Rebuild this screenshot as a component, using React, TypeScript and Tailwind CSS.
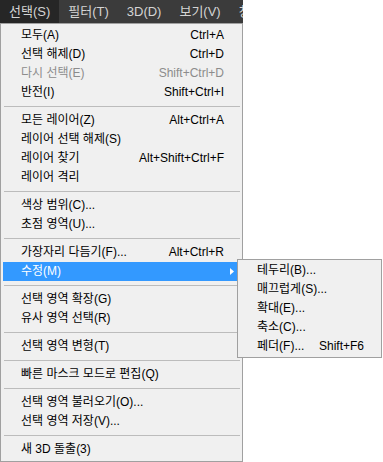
import React from "react"

type Item = { label: string; shortcut?: string; disabled?: boolean; sub?: boolean }

const groups: Item[][] = [
  [
    { label: "모두(A)", shortcut: "Ctrl+A" },
    { label: "선택 해제(D)", shortcut: "Ctrl+D" },
    { label: "다시 선택(E)", shortcut: "Shift+Ctrl+D", disabled: true },
    { label: "반전(I)", shortcut: "Shift+Ctrl+I" },
  ],
  [
    { label: "모든 레이어(Z)", shortcut: "Alt+Ctrl+A" },
    { label: "레이어 선택 해제(S)" },
    { label: "레이어 찾기", shortcut: "Alt+Shift+Ctrl+F" },
    { label: "레이어 격리" },
  ],
  [{ label: "색상 범위(C)..." }, { label: "초점 영역(U)..." }],
  [
    { label: "가장자리 다듬기(F)...", shortcut: "Alt+Ctrl+R" },
    { label: "수정(M)", sub: true },
  ],
  [{ label: "선택 영역 확장(G)" }, { label: "유사 영역 선택(R)" }],
  [{ label: "선택 영역 변형(T)" }],
  [{ label: "빠른 마스크 모드로 편집(Q)" }],
  [{ label: "선택 영역 불러오기(O)..." }, { label: "선택 영역 저장(V)..." }],
  [{ label: "새 3D 돌출(3)" }],
]

const subItems: Item[] = [
  { label: "테두리(B)..." },
  { label: "매끄럽게(S)..." },
  { label: "확대(E)..." },
  { label: "축소(C)..." },
  { label: "페더(F)...", shortcut: "Shift+F6" },
]

const menus = ["선택(S)", "필터(T)", "3D(D)", "보기(V)", "창"]

function SubMenu() {
  return (
    <div className="absolute -top-[3px] left-[234px] w-[145px] border border-[#a0a0a0] bg-[#f0f0f0] p-px z-10">
      {subItems.map((item) => (
        <div key={item.label} className="flex h-[19px] items-center pl-[18px] pr-[16px] leading-[19px] text-black">
          <span>{item.label}</span>
          {item.shortcut && <span className="ml-auto">{item.shortcut}</span>}
        </div>
      ))}
    </div>
  )
}

function Row({ item }: { item: Item }) {
  if (item.sub) {
    return (
      <div className="relative flex h-[19px] items-center bg-[#3399ff] pl-[18px] pr-[16px] leading-[19px] text-white">
        <span>{item.label}</span>
        <svg width="4" height="7" viewBox="0 0 4 7" className="ml-auto -mr-[10px]">
          <polygon points="0,0 4,3.5 0,7" fill="#ffffff" />
        </svg>
        <SubMenu />
      </div>
    )
  }
  return (
    <div
      className={`flex h-[19px] items-center pl-[18px] pr-[16px] leading-[19px] ${
        item.disabled ? "text-[#8c8c8c]" : "text-black"
      }`}
    >
      <span>{item.label}</span>
      {item.shortcut && <span className="ml-auto">{item.shortcut}</span>}
    </div>
  )
}

export default function App() {
  return (
    <div
      className="w-[383px] h-[462px] bg-white text-[12px] overflow-hidden"
      style={{ fontFamily: '"Liberation Sans", "Noto Sans CJK KR", sans-serif' }}
    >
      <div className="flex h-[23px] w-[243px] overflow-hidden bg-[#3b3b3b] text-[13px] text-[#d4d4d4]">
        {menus.map((m, i) => (
          <div
            key={m}
            className={`flex h-full shrink-0 items-center px-[9px] ${i === 0 ? "bg-[#262626]" : ""}`}
          >
            {m}
          </div>
        ))}
      </div>

      <div className="w-[243px] border border-[#a0a0a0] bg-[#f0f0f0] p-[2px]">
        {groups.map((group, gi) => (
          <div key={gi}>
            {gi > 0 && (
              <div className="flex h-[9px] items-center">
                <div className="ml-px h-px w-full bg-[#bcbcbc]" />
              </div>
            )}
            {group.map((item) => (
              <Row key={item.label} item={item} />
            ))}
          </div>
        ))}
      </div>
    </div>
  )
}
